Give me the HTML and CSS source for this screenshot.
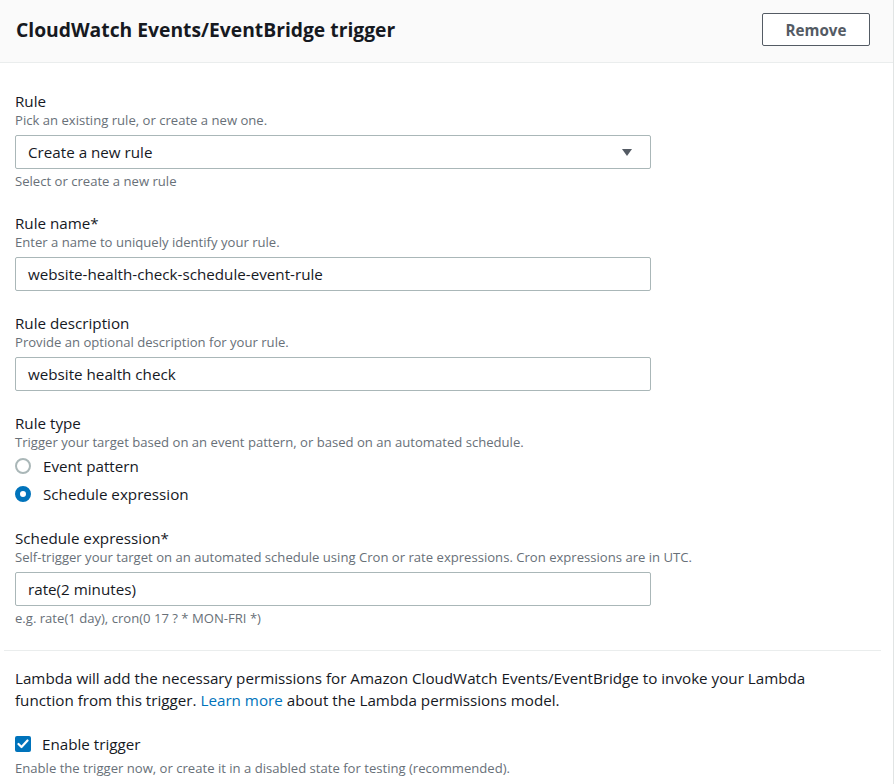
FILE: index.html
```html
<!DOCTYPE html>
<html lang="en">
<head>
<meta charset="utf-8">
<title>CloudWatch Events/EventBridge trigger</title>
<link rel="stylesheet" href="styles.css">
</head>
<body>
<div class="panel">
  <div class="panel-header">
    <h2 class="panel-title">CloudWatch Events/EventBridge trigger</h2>
    <button class="btn-remove" type="button">Remove</button>
  </div>
  <div class="panel-body">
    <div class="field field-hinted">
      <div class="label">Rule</div>
      <div class="desc">Pick an existing rule, or create a new one.</div>
      <div class="control select">
        <span>Create a new rule</span>
        <svg class="caret" width="10" height="7" viewBox="0 0 10 7"><path d="M0 0 H10 L5 7 Z" fill="#545b64"/></svg>
      </div>
      <div class="hint">Select or create a new rule</div>
    </div>

    <div class="field">
      <div class="label">Rule name*</div>
      <div class="desc">Enter a name to uniquely identify your rule.</div>
      <div class="control input">website-health-check-schedule-event-rule</div>
    </div>

    <div class="field">
      <div class="label">Rule description</div>
      <div class="desc">Provide an optional description for your rule.</div>
      <div class="control input">website health check</div>
    </div>

    <div class="field field-radio">
      <div class="label">Rule type</div>
      <div class="desc">Trigger your target based on an event pattern, or based on an automated schedule.</div>
      <div class="radio-group">
        <div class="radio-row"><span class="radio"></span><span>Event pattern</span></div>
        <div class="radio-row"><span class="radio checked"></span><span>Schedule expression</span></div>
      </div>
    </div>

    <div class="field">
      <div class="label">Schedule expression*</div>
      <div class="desc">Self-trigger your target on an automated schedule using Cron or rate expressions. Cron expressions are in UTC.</div>
      <div class="control input">rate(2 minutes)</div>
      <div class="hint">e.g. rate(1 day), cron(0 17 ? * MON-FRI *)</div>
    </div>
  </div>
  <div class="divider"></div>
  <div class="panel-footer">
    <p class="perm">Lambda will add the necessary permissions for Amazon CloudWatch Events/EventBridge to invoke your Lambda function from this trigger. <a class="link" href="#">Learn more</a> about the Lambda permissions model.</p>
    <div class="check-row">
      <span class="checkbox"><svg width="12" height="10" viewBox="0 0 12 10"><path d="M1.5 5 L4.5 8 L10.5 1.5" fill="none" stroke="#fff" stroke-width="2.2" stroke-linecap="round" stroke-linejoin="round"/></svg></span>
      <span>Enable trigger</span>
    </div>
    <div class="hint check-hint">Enable the trigger now, or create it in a disabled state for testing (recommended).</div>
  </div>
</div>
</body>
</html>
```

FILE: styles.css
```css
html, body {
  margin: 0;
  padding: 0;
  background: #ffffff;
}
body {
  font-family: "Open Sans", "Noto Sans", Arial, sans-serif;
  color: #16191f;
  font-size: 15.2px;
  line-height: 22px;
}
.panel {
  width: 893px;
  min-height: 784px;
  border-right: 1px solid #e1e4e4;
}
.panel-header {
  height: 63px;
  box-sizing: border-box;
  background: #fafafa;
  border-bottom: 1px solid #eaeded;
  display: flex;
  align-items: center;
  justify-content: space-between;
  padding: 0 23px 0 16px;
}
.panel-title {
  margin: 0;
  font-size: 19.3px;
  font-weight: 700;
  line-height: 24px;
  color: #16191f;
  position: relative;
  top: -1px;
}
.btn-remove {
  width: 108px;
  height: 33px;
  margin-top: -3px;
  background: #ffffff;
  border: 1px solid #545b64;
  border-radius: 2px;
  font-family: inherit;
  font-size: 15.2px;
  font-weight: 700;
  color: #545b64;
  padding: 0;
}
.panel-body {
  padding: 27px 0 3px 15px;
}
.field {
  margin-bottom: 21px;
}
.field-hinted {
  margin-bottom: 23px;
}
.label {
  font-size: 15.2px;
  line-height: 22px;
  color: #16191f;
}
.desc {
  font-size: 13.1px;
  line-height: 16px;
  color: #687078;
}
.control {
  width: 636px;
  height: 34px;
  box-sizing: border-box;
  border: 1px solid #aab7b8;
  border-radius: 2px;
  margin-top: 7px;
  padding: 0 12px;
  display: flex;
  align-items: center;
  font-size: 15.2px;
  color: #16191f;
}
.select {
  justify-content: space-between;
  padding-right: 18px;
}
.caret {
  display: block;
}
.hint {
  font-size: 13.1px;
  line-height: 16px;
  color: #687078;
  margin-top: 4px;
}
.field-radio {
  margin-bottom: 19px;
}
.radio-group {
  margin-top: 2px;
}
.radio-row {
  height: 28px;
  display: flex;
  align-items: center;
  gap: 12px;
}
.radio {
  width: 16px;
  height: 16px;
  box-sizing: border-box;
  border-radius: 50%;
  border: 2px solid #aab7b8;
  background: #fff;
}
.radio.checked {
  border: 5px solid #0073bb;
}
.divider {
  height: 1px;
  background: #eaeded;
  margin: 0 12px 0 4px;
}
.panel-footer {
  padding: 16px 0 0 15px;
}
.perm {
  margin: 0;
  width: 830px;
  line-height: 22px;
}
.link {
  color: #0073bb;
  text-decoration: none;
}
.check-row {
  margin-top: 21px;
  height: 24px;
  display: flex;
  align-items: center;
  gap: 11px;
}
.checkbox {
  width: 16px;
  height: 16px;
  border-radius: 2px;
  background: #0073bb;
  display: flex;
  align-items: center;
  justify-content: center;
}
.check-hint {
  margin-top: 4px;
}
```
